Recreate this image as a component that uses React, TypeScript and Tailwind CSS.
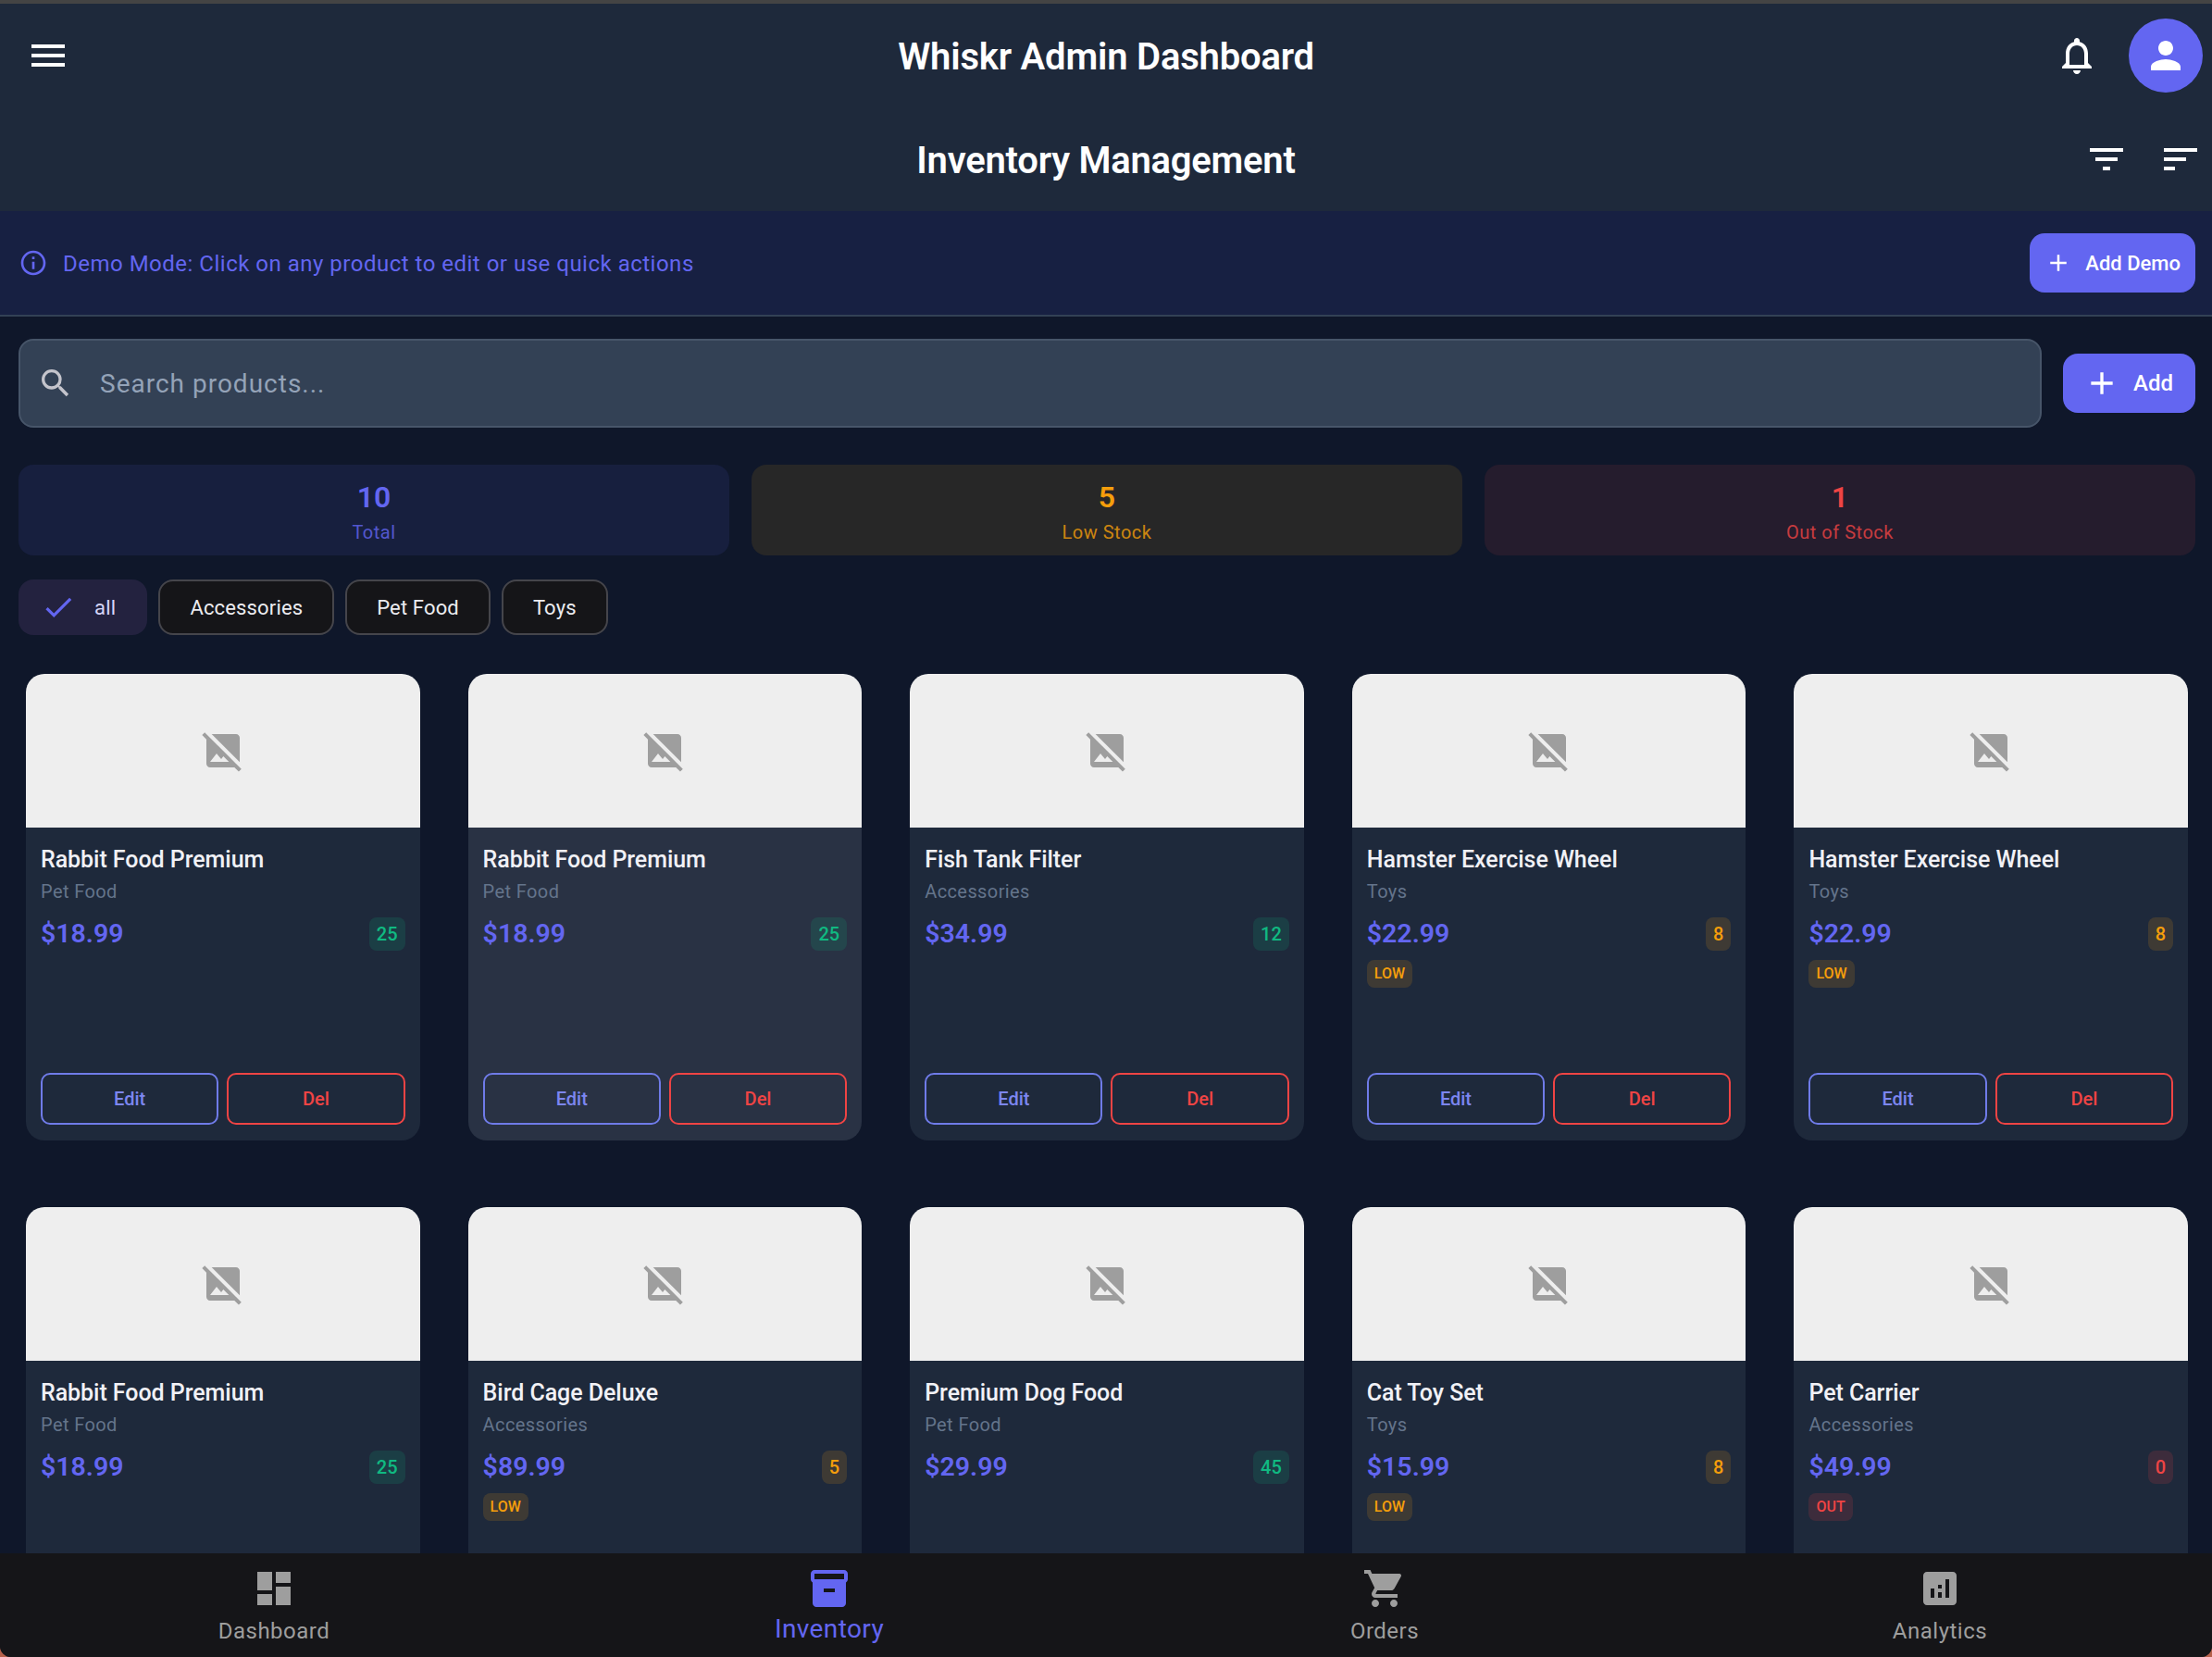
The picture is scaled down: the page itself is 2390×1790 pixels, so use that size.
import {
  MdAdd,
  MdAnalytics,
  MdCheck,
  MdDashboard,
  MdFilterList,
  MdImageNotSupported,
  MdInfoOutline,
  MdInventory2,
  MdMenu,
  MdNotificationsNone,
  MdPerson,
  MdSearch,
  MdShoppingCart,
  MdSort,
} from 'react-icons/md';

type Product = { name: string; category: string; price: string; stock: number };

const products: Product[] = [
  { name: 'Rabbit Food Premium', category: 'Pet Food', price: '$18.99', stock: 25 },
  { name: 'Rabbit Food Premium', category: 'Pet Food', price: '$18.99', stock: 25 },
  { name: 'Fish Tank Filter', category: 'Accessories', price: '$34.99', stock: 12 },
  { name: 'Hamster Exercise Wheel', category: 'Toys', price: '$22.99', stock: 8 },
  { name: 'Hamster Exercise Wheel', category: 'Toys', price: '$22.99', stock: 8 },
  { name: 'Rabbit Food Premium', category: 'Pet Food', price: '$18.99', stock: 25 },
  { name: 'Bird Cage Deluxe', category: 'Accessories', price: '$89.99', stock: 5 },
  { name: 'Premium Dog Food', category: 'Pet Food', price: '$29.99', stock: 45 },
  { name: 'Cat Toy Set', category: 'Toys', price: '$15.99', stock: 8 },
  { name: 'Pet Carrier', category: 'Accessories', price: '$49.99', stock: 0 },
];

const navItems = [
  { label: 'Dashboard', icon: MdDashboard },
  { label: 'Inventory', icon: MdInventory2, active: true },
  { label: 'Orders', icon: MdShoppingCart },
  { label: 'Analytics', icon: MdAnalytics },
];

function ProductCard({ product, hovered }: { product: Product; hovered?: boolean }) {
  const { stock } = product;
  const stockClass =
    stock === 0
      ? 'bg-[#ef4444]/15 text-[#ef4444]'
      : stock <= 10
        ? 'bg-[#f59e0b]/15 text-[#f59e0b]'
        : 'bg-[#10b981]/15 text-[#10b981]';

  return (
    <div
      className={`flex h-[504px] flex-col overflow-hidden rounded-[20px] ${hovered ? 'bg-[#293244]' : 'bg-[#1e293b]'}`}
    >
      <div className="flex h-[166px] shrink-0 items-center justify-center bg-[#eeeeee]">
        <MdImageNotSupported size={48} className="text-[#9e9e9e]" />
      </div>
      <div className="flex flex-1 flex-col px-4 pt-[20px] pb-[17px]">
        <div className="text-[25px] leading-[29px] font-medium tracking-[-0.05px] text-[#f1f1f6]">{product.name}</div>
        <div className="mt-[8px] text-[20px] leading-[24px] tracking-[0.4px] text-[#64748b]">{product.category}</div>
        <div className="mt-[16px] flex items-center justify-between">
          <span className="text-[28.5px] leading-[36px] font-semibold text-[#6366f1]">{product.price}</span>
          <span className={`rounded-lg px-2 text-[20px] leading-[36px] font-medium ${stockClass}`}>{stock}</span>
        </div>
        {stock <= 10 && (
          <span className={`mt-[10px] self-start rounded-lg px-2 text-[16px] leading-[30px] font-medium ${stockClass}`}>
            {stock === 0 ? 'OUT' : 'LOW'}
          </span>
        )}
        <div className="mt-auto grid grid-cols-2 gap-[9px]">
          <button className="h-[56px] rounded-[10px] border-2 border-[#6f7be8] text-[20px] font-medium text-[#7c86f0]">
            Edit
          </button>
          <button className="h-[56px] rounded-[10px] border-2 border-[#ef4444] text-[20px] font-medium text-[#ef4444]">
            Del
          </button>
        </div>
      </div>
    </div>
  );
}

function Stat({ value, label, box, text }: { value: string; label: string; box: string; text: string }) {
  return (
    <div className={`flex h-[98px] flex-col items-center rounded-2xl pt-[15px] ${box} ${text}`}>
      <span className="text-[32px] leading-[40px] font-semibold">{value}</span>
      <span className="mt-[4px] text-[20px] leading-[28px] tracking-[0.5px] opacity-80">{label}</span>
    </div>
  );
}

export default function App() {
  return (
    <div className="h-[1790px] w-[2390px] overflow-hidden bg-[#b5604a]">
      <div className="flex h-full flex-col overflow-hidden rounded-b-xl bg-[#0f172a] font-['Roboto',sans-serif]">
        <div className="h-[4px] shrink-0 bg-[#444444]" />

        <header className="shrink-0 bg-[#1e293b] text-white">
          <div className="grid h-[112px] grid-cols-[1fr_auto_1fr] items-center px-[10px]">
            <MdMenu size={48} className="ml-[18px]" />
            <h1 className="pt-[3px] text-[40px] font-semibold tracking-[-0.2px]">Whiskr Admin Dashboard</h1>
            <div className="flex items-center justify-end gap-[32px]">
              <MdNotificationsNone size={48} />
              <div className="flex h-[80px] w-[80px] items-center justify-center rounded-full bg-[#6366f1]">
                <MdPerson size={48} />
              </div>
            </div>
          </div>
          <div className="grid h-[112px] grid-cols-[1fr_auto_1fr] items-center px-[10px]">
            <div />
            <h2 className="pt-[4px] text-[40px] font-semibold tracking-[-0.25px]">Inventory Management</h2>
            <div className="flex items-center justify-end gap-[32px]">
              <MdFilterList size={48} />
              <MdSort size={48} />
            </div>
          </div>
        </header>

        <div className="flex h-[114px] shrink-0 items-center justify-between border-b-2 border-[#334155] bg-[#172042] pr-[18px] pl-[20px]">
          <div className="flex items-center gap-[16px] text-[#6366f1]">
            <MdInfoOutline size={32} />
            <span className="pt-[1px] text-[24px] tracking-[0.5px]">Demo Mode: Click on any product to edit or use quick actions</span>
          </div>
          <button className="flex h-[64px] items-center gap-[14px] rounded-2xl bg-[#6366f1] px-[16px] text-[22px] font-medium text-white">
            <MdAdd size={30} />
            Add Demo
          </button>
        </div>

        <main className="min-h-0 flex-1 overflow-hidden">
          <div className="flex items-center gap-[23px] pt-[24px] pr-[18px] pl-[20px]">
            <div className="flex h-[96px] flex-1 items-center gap-[28px] rounded-2xl border-2 border-[#475569] bg-[#334155] pl-[18px]">
              <MdSearch size={40} className="text-[#c4c4cc]" />
              <span className="pt-[1px] text-[28px] tracking-[1px] text-[#94a3b8]">Search products...</span>
            </div>
            <button className="flex h-[64px] items-center gap-[14px] rounded-2xl bg-[#6366f1] pr-[24px] pl-[22px] text-[24px] font-medium text-white">
              <MdAdd size={40} />
              Add
            </button>
          </div>

          <div className="mt-[40px] grid grid-cols-3 gap-6 pr-[18px] pl-[20px]">
            <Stat value="10" label="Total" box="bg-[#171f3e]" text="text-[#6366f1]" />
            <Stat value="5" label="Low Stock" box="bg-[#272727]" text="text-[#f59e0b]" />
            <Stat value="1" label="Out of Stock" box="bg-[#251c2d]" text="text-[#ef4444]" />
          </div>

          <div className="mt-[26px] flex gap-3 pl-[20px]">
            <div className="flex h-[60px] items-center gap-[20px] rounded-2xl bg-[#23223f] pr-[34px] pl-[24px] text-[22px] tracking-[0.25px] text-[#d5d6f8]">
              <MdCheck size={38} className="text-[#6366f1]" />
              all
            </div>
            {['Accessories', 'Pet Food', 'Toys'].map((chip) => (
              <div
                key={chip}
                className="flex h-[60px] items-center rounded-2xl border-2 border-[#45454b] bg-[#151518] px-[32px] text-[22px] tracking-[0.15px] text-[#ececf0]"
              >
                {chip}
              </div>
            ))}
          </div>

          <div className="mt-[42px] grid grid-cols-5 gap-x-[52px] gap-y-[72px] pr-[26px] pl-[28px]">
            {products.map((product, i) => (
              <ProductCard key={i} product={product} hovered={i === 1} />
            ))}
          </div>
        </main>

        <nav className="flex h-[112px] shrink-0 bg-[#151518]">
          <div className="-ml-1 flex">
            {navItems.map(({ label, icon: Icon, active }) => (
              <div key={label} className="flex w-[600px] flex-col items-center pt-[14px]">
                <Icon size={48} className={active ? 'text-[#6366f1]' : 'text-[#9e9e9e]'} />
                <span
                  className={
                    active
                      ? 'mt-[2px] text-[28px] leading-[36px] tracking-[0.4px] text-[#6366f1]'
                      : 'mt-[4px] text-[24px] leading-[36px] tracking-[0.5px] text-[#9e9e9e]'
                  }
                >
                  {label}
                </span>
              </div>
            ))}
          </div>
        </nav>
      </div>
    </div>
  );
}
